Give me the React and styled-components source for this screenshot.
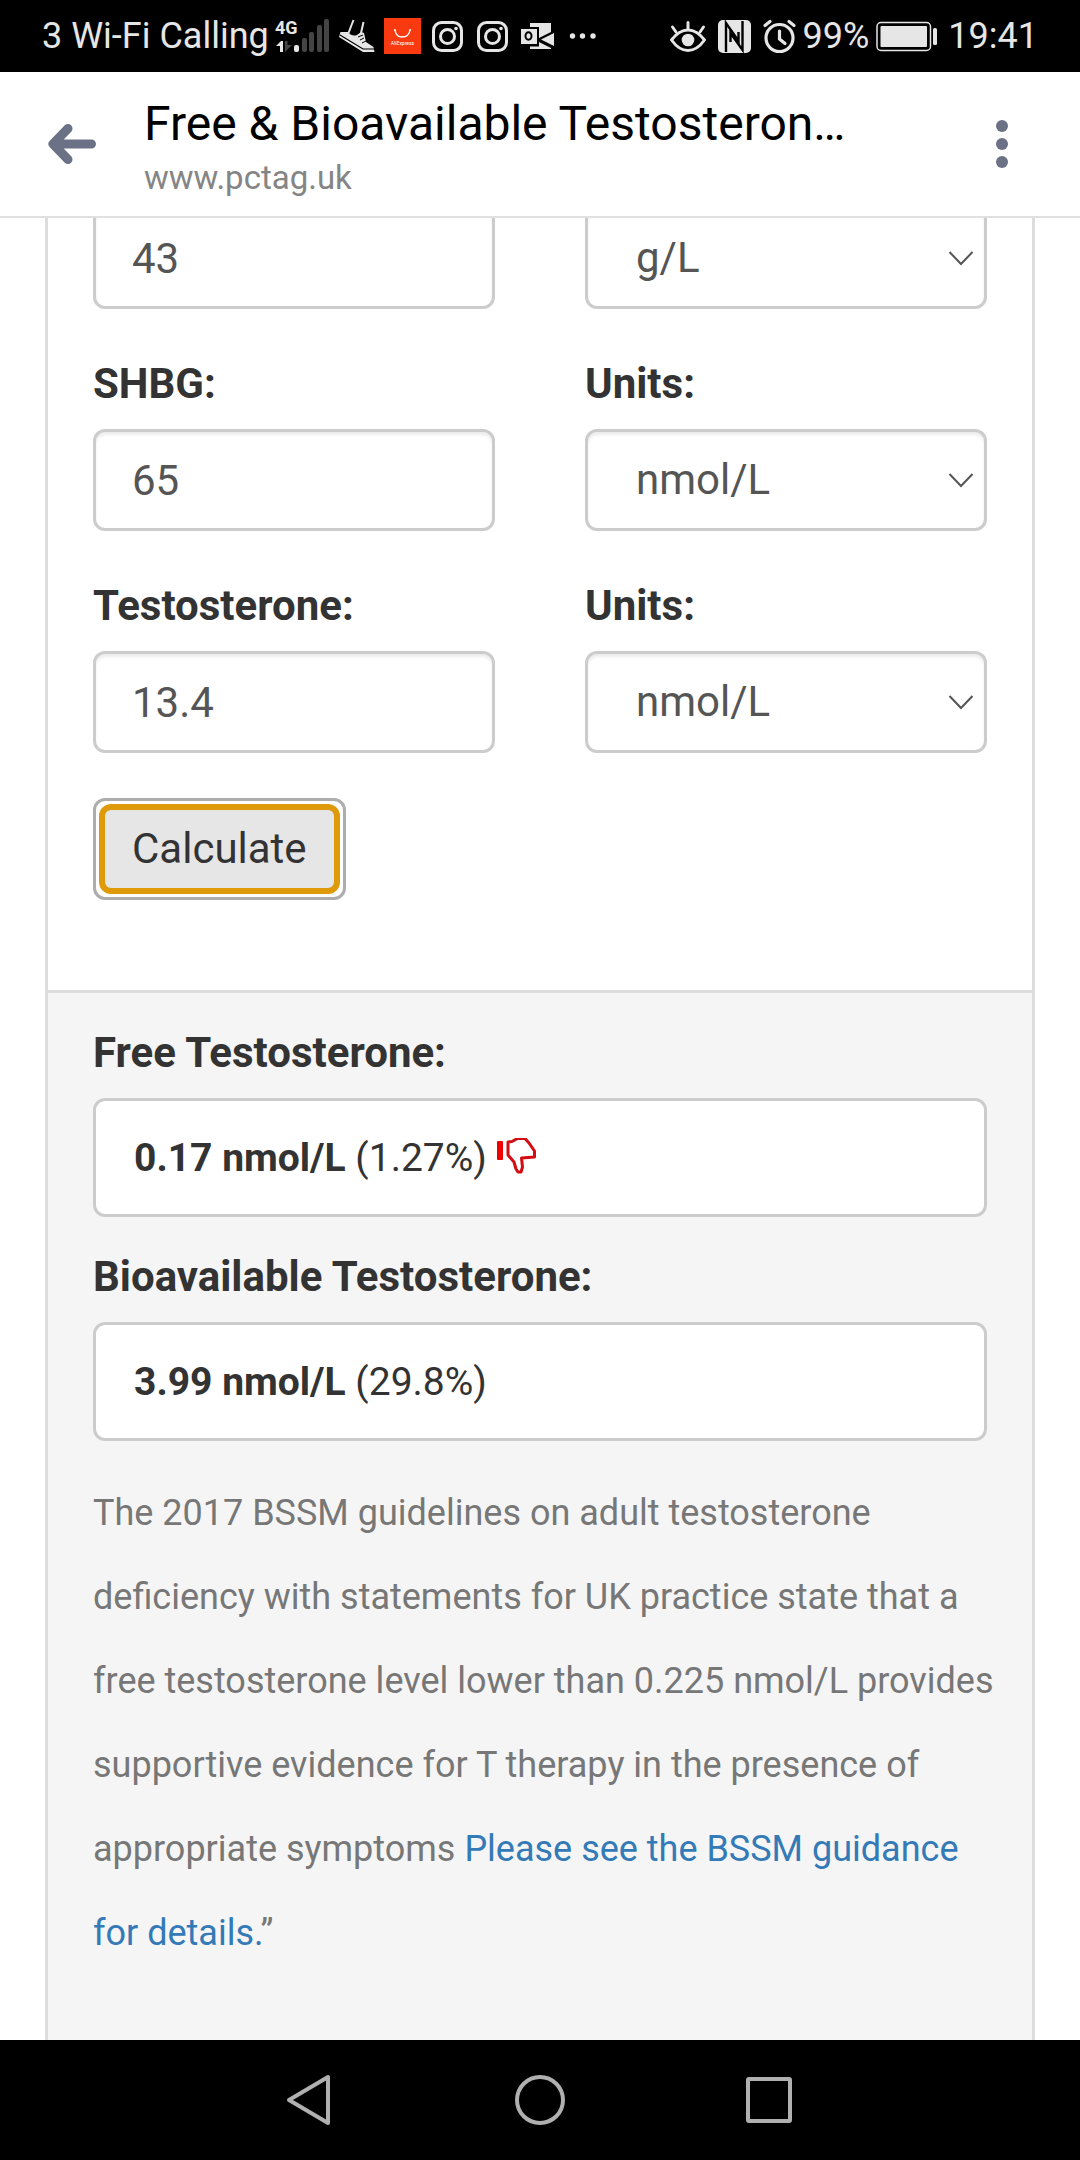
import React, { useState } from 'react'
import styled, { createGlobalStyle } from 'styled-components'

const GlobalStyle = createGlobalStyle`
	* {
		box-sizing: border-box;
	}

	body {
		margin: 0;
		background: white;
		font-family: Roboto, 'Liberation Sans', sans-serif;
		font-size: 42px;
		line-height: 60px;
		color: #333;
	}
`

const Page = styled.div`
	display: flex;
	flex-direction: column;
	min-height: 100vh;
`

const StatusBar = styled.div`
	display: flex;
	justify-content: space-between;
	height: 72px;
	padding: 0 42px;
	background: black;
	color: #e6e6e6;
	font-size: 36px;
	line-height: 74px;
	white-space: nowrap;
`
const StatusGroup = styled.div`
	display: flex;
	align-items: center;

	svg {
		display: block;
		flex: none;
	}
`

const Header = styled.header`
	display: flex;
	align-items: center;
	height: 146px;
	padding: 0 48px;
	border-bottom: 2px solid #e0e0e0;
	background: white;
`
const IconButton = styled.button`
	display: flex;
	padding: 0;
	border: none;
	background: none;
	cursor: pointer;
`
const TitleBox = styled.div`
	flex: 1;
	min-width: 0;
	padding: 8px 0 0 48px;
`
const Title = styled.h1`
	margin: 0;
	color: black;
	font-size: 48px;
	font-weight: 400;
	line-height: 60px;
	white-space: nowrap;
`
const Url = styled.div`
	color: #858585;
	font-size: 33px;
	line-height: 48px;
`

const Main = styled.main`
	display: flex;
	flex: 1;
	padding: 0 45px;
	overflow: hidden;
`
const Card = styled.div`
	display: flex;
	flex: 1;
	flex-direction: column;
	min-width: 0;
	border: 3px solid #ddd;
	border-width: 0 3px;
`
/* the page is scrolled, so the first row slides under the header */
const Form = styled.form`
	margin-top: -11px;
	padding: 0 45px 90px;
`
const Row = styled.div`
	display: grid;
	grid-template-columns: 1fr 1fr;
	column-gap: 90px;
	margin-bottom: 45px;
`
const Label = styled.label`
	display: block;
	margin-bottom: 15px;
	font-weight: 700;
`
const Input = styled.input`
	display: block;
	width: 100%;
	height: 102px;
	padding: 0 36px;
	border: 3px solid #ccc;
	border-radius: 12px;
	background: white;
	box-shadow: inset 0 3px 3px rgba(0, 0, 0, 0.075);
	color: #555;
	font: inherit;
	outline: none;
`
const SelectBox = styled.div`
	display: grid;
	align-items: center;

	> * {
		grid-area: 1 / 1;
	}

	svg {
		justify-self: end;
		margin-right: 13px;
		pointer-events: none;
	}
`
const Select = styled(Input).attrs({ as: 'select' })`
	padding: 0 48px;
	appearance: none;
`
const CalculateButton = styled.button`
	display: flex;
	height: 102px;
	padding: 3px;
	border: 3px solid #adadad;
	border-radius: 12px;
	background: white;
	color: #333;
	font: inherit;
	cursor: pointer;
`
const FocusRing = styled.span`
	display: flex;
	align-items: center;
	height: 90px;
	padding: 0 27px;
	border: 6px solid #df9a0a;
	border-radius: 12px;
	background: #e6e6e6;
`

const Results = styled.section`
	flex: 1;
	padding: 30px 45px 65px;
	border-top: 3px solid #ddd;
	background: #f5f5f5;
`
const ResultTitle = styled.h2`
	margin: 0 0 15px;
	font-size: 42px;
	font-weight: 700;
	line-height: 60px;
`
const ResultBox = styled.div`
	display: flex;
	align-items: center;
	gap: 9px;
	height: 119px;
	margin-bottom: 30px;
	padding: 0 38px;
	border: 3px solid #ccc;
	border-radius: 12px;
	background: white;
	font-size: 39px;
`
const Note = styled.p`
	margin: 0 -12px 0 0;
	color: #777;
	font-size: 36px;
	line-height: 84px;
`
const Link = styled.a`
	color: #337ab7;
	text-decoration: none;
`

const NavBar = styled.nav`
	display: flex;
	align-items: center;
	justify-content: center;
	gap: 167px;
	height: 120px;
	background: black;
`

const SignalIcon = () => (
	<svg width='66' height='72' viewBox='269 0 66 72'>
		<text x='275' y='34' fontSize='18' fontWeight='700' fontFamily='Roboto' fill='#e6e6e6'>
			4G
		</text>
		<path d='M276 46 L281 41 H283 V52 H280 V46 Z' fill='#e6e6e6' />
		<path d='M285 41 H287.5 V45 H292 L285 52 Z' fill='#444' />
		<rect x='294' y='45' width='5' height='7' rx='2' fill='#e6e6e6' />
		<g fill='#444'>
			<rect x='302' y='38' width='5' height='14' rx='2' />
			<rect x='309' y='32' width='5' height='20' rx='2' />
			<rect x='317' y='25' width='5' height='27' rx='2' />
			<rect x='324' y='19' width='5' height='33' rx='2' />
		</g>
	</svg>
)

const ShoeIcon = () => (
	<svg width='45' height='72' viewBox='335 0 45 72'>
		<path d='M340.500 32 H348 Q352 37 357 35 L361 32 L364 33 L366 42 L373.500 47 L374.500 52 L363 52 L339 37 Z' fill='#e6e6e6' />
		<path d='M353.500 20 L348.500 33 M363.500 22 L361 33' fill='none' stroke='#e6e6e6' strokeWidth='2' />
		<path d='M340 35 L363 49 H375' fill='none' stroke='black' strokeWidth='1.2' />
		<path d='M358 37 L363 35 M360 40 L364 38 M362 43 L366 41' fill='none' stroke='black' strokeWidth='1' />
	</svg>
)

const AliIcon = () => (
	<svg width='45' height='72' viewBox='380 0 45 72'>
		<rect x='384' y='18' width='37' height='36' fill='#f93a10' />
		<path d='M395 30 Q396 37 402 37 Q409 37 410 30' fill='none' stroke='white' strokeWidth='1.4' />
		<circle cx='395' cy='30' r='1' fill='white' />
		<circle cx='410' cy='30' r='1' fill='white' />
		<text x='402.5' y='45' fontSize='5' fontFamily='Roboto' textAnchor='middle' fill='white'>
			AliExpress
		</text>
	</svg>
)

const InstagramIcon = () => (
	<svg width='45' height='72' viewBox='0 0 45 72' fill='none' stroke='#e6e6e6'>
		<rect x='8.5' y='22.5' width='28' height='28' rx='8' strokeWidth='3' />
		<circle cx='22.5' cy='36.5' r='7' strokeWidth='3' />
		<circle cx='31' cy='28.5' r='1.8' fill='#e6e6e6' stroke='none' />
	</svg>
)

const OutlookIcon = () => (
	<svg width='45' height='72' viewBox='515 0 45 72'>
		<g fill='#e6e6e6'>
			<path d='M530 23 H551 V32 L539 38 V27 H530 Z' />
			<path d='M554 33 V46 L541 39.500 Z' />
			<path d='M539 42 L551 48 V49 H530 V46.500 H539 Z' />
			<rect x='521' y='29' width='16' height='15' />
		</g>
		<ellipse cx='528.5' cy='36' rx='3' ry='3.8' fill='none' stroke='black' strokeWidth='2' />
	</svg>
)

const MoreIcon = () => (
	<svg width='45' height='72' viewBox='0 0 45 72' fill='#e6e6e6'>
		<circle cx='12.5' cy='36' r='2.7' />
		<circle cx='22.5' cy='36' r='2.7' />
		<circle cx='33' cy='36' r='2.7' />
	</svg>
)

const EyeIcon = () => (
	<svg width='46' height='72' viewBox='665 0 46 72' fill='none' stroke='#e6e6e6' strokeWidth='3' strokeLinecap='round'>
		<path d='M671.5 40 Q679 30 688 30 Q697 30 704.5 40 Q697 50.5 688 50.5 Q679 50.5 671.5 40 Z' strokeLinejoin='round' />
		<circle cx='688' cy='40' r='6.300' fill='#e6e6e6' stroke='none' />
		<path d='M688 22.500 V29 M672.500 27 L676 32 M703.500 27 L700 32' />
	</svg>
)

const NfcIcon = () => (
	<svg width='46' height='72' viewBox='711 0 46 72'>
		<rect x='718' y='20' width='33' height='33' rx='5' fill='#e6e6e6' />
		<g fill='none' stroke='black' strokeWidth='2.4'>
			<path d='M726 52 V23 L738.500 41 V32' />
			<path d='M730.500 42 V33 L742.500 50 V21' />
		</g>
	</svg>
)

const AlarmIcon = () => (
	<svg width='46' height='72' viewBox='757 0 46 72' fill='none' stroke='#e6e6e6' strokeWidth='3.2' strokeLinecap='round'>
		<circle cx='779.5' cy='38' r='13.5' />
		<path d='M779.5 31 V39 L785 43.500 M765 25.500 L770 21.500 M794 25.500 L789 21.500' />
	</svg>
)

const BatteryIcon = () => (
	<svg width='79' height='72' viewBox='870 0 79 72'>
		<rect x='878' y='22.500' width='53.500' height='28' rx='4' fill='none' stroke='#e6e6e6' strokeWidth='1.5' />
		<rect x='881.500' y='26' width='46.500' height='21' rx='1' fill='#e6e6e6' />
		<rect x='934' y='28' width='4' height='17' rx='1.500' fill='#e6e6e6' />
	</svg>
)

const Chevron = () => (
	<svg width='26' height='18' viewBox='0 0 26 18' fill='none' stroke='#555' strokeWidth='2'>
		<path d='M1.500 3 L13 15 L24.500 3' />
	</svg>
)

const ThumbDown = () => (
	<svg width='42' height='40' viewBox='-1 2 42 40'>
		<rect x='0' y='5' width='6' height='19' rx='1' fill='#f00000' />
		<path
			d='M11 6 L15 5.500 L20.500 2.500 H28 L32 7 L37.500 15 V21 L24.500 22 L25.500 31 L24 36 L21 36 L19 33 L17 26 L11 19 Z'
			fill='white'
			stroke='#d40d12'
			strokeWidth='3'
			strokeLinejoin='round'
		/>
	</svg>
)

const unitOptions = {
	albumin: ['g/L', 'g/dL'],
	hormone: ['nmol/L', 'ng/dL'],
}

function UnitSelect({ id, options, ...rest }) {
	return (
		<SelectBox>
			<Select id={id} {...rest}>
				{options.map((unit) => (
					<option key={unit}>{unit}</option>
				))}
			</Select>
			<Chevron />
		</SelectBox>
	)
}

export default function App() {
	const [values, setValues] = useState({ albumin: '43', shbg: '65', testosterone: '13.4' })

	const onChangeHandler = (e) => {
		setValues({ ...values, [e.target.name]: e.target.value })
	}

	const fields = [
		{ name: 'shbg', label: 'SHBG:' },
		{ name: 'testosterone', label: 'Testosterone:' },
	]

	return (
		<Page>
			<GlobalStyle />
			<StatusBar>
				<StatusGroup>
					<span>3 Wi-Fi Calling</span>
					<SignalIcon />
					<ShoeIcon />
					<AliIcon />
					<InstagramIcon />
					<InstagramIcon />
					<OutlookIcon />
					<MoreIcon />
				</StatusGroup>
				<StatusGroup>
					<EyeIcon />
					<NfcIcon />
					<AlarmIcon />
					<span>99%</span>
					<BatteryIcon />
					<span>19:41</span>
				</StatusGroup>
			</StatusBar>

			<Header>
				<IconButton aria-label='Back'>
					<svg width='48' height='42' viewBox='0 0 48 42' fill='none' stroke='#6b7285' strokeWidth='9' strokeLinecap='round' strokeLinejoin='round'>
						<path d='M20 5.500 L5 21 L20 36.500 M6 21 H43.500' />
					</svg>
				</IconButton>
				<TitleBox>
					<Title>Free &amp; Bioavailable Testosteron…</Title>
					<Url>www.pctag.uk</Url>
				</TitleBox>
				<IconButton aria-label='Menu'>
					<svg width='60' height='54' viewBox='0 0 60 54' fill='#6b7285'>
						<circle cx='30' cy='9' r='6' />
						<circle cx='30' cy='27' r='6' />
						<circle cx='30' cy='45' r='6' />
					</svg>
				</IconButton>
			</Header>

			<Main>
				<Card>
					<Form onSubmit={(e) => e.preventDefault()}>
						<Row>
							<Input name='albumin' aria-label='Albumin' value={values.albumin} onChange={onChangeHandler} />
							<UnitSelect id='albumin-units' aria-label='Albumin units' options={unitOptions.albumin} />
						</Row>
						{fields.map(({ name, label }) => (
							<Row key={name}>
								<div>
									<Label htmlFor={name}>{label}</Label>
									<Input id={name} name={name} value={values[name]} onChange={onChangeHandler} />
								</div>
								<div>
									<Label htmlFor={`${name}-units`}>Units:</Label>
									<UnitSelect id={`${name}-units`} options={unitOptions.hormone} />
								</div>
							</Row>
						))}
						<CalculateButton type='submit'>
							<FocusRing>Calculate</FocusRing>
						</CalculateButton>
					</Form>

					<Results>
						<ResultTitle>Free Testosterone:</ResultTitle>
						<ResultBox>
							<span>
								<b>0.17 nmol/L</b> (1.27%)
							</span>
							<ThumbDown />
						</ResultBox>
						<ResultTitle>Bioavailable Testosterone:</ResultTitle>
						<ResultBox>
							<span>
								<b>3.99 nmol/L</b> (29.8%)
							</span>
						</ResultBox>
						<Note>
							The 2017 BSSM guidelines on adult testosterone deficiency with statements for UK practice state
							that a free testosterone level lower than 0.225 nmol/L provides supportive evidence for T
							therapy in the presence of appropriate symptoms{' '}
							<Link href='#guidance'>Please see the BSSM guidance for details.</Link>”
						</Note>
					</Results>
				</Card>
			</Main>

			<NavBar>
				<IconButton aria-label='Back'>
					<svg width='64' height='64' viewBox='0 0 64 64' fill='none' stroke='#b0b0b0' strokeWidth='4' strokeLinejoin='round'>
						<path d='M12 32 L51 9 V55 Z' />
					</svg>
				</IconButton>
				<IconButton aria-label='Home'>
					<svg width='64' height='64' viewBox='0 0 64 64' fill='none' stroke='#b0b0b0' strokeWidth='4'>
						<circle cx='32' cy='32' r='23' />
					</svg>
				</IconButton>
				<IconButton aria-label='Recent apps'>
					<svg width='64' height='64' viewBox='0 0 64 64' fill='none' stroke='#b0b0b0' strokeWidth='4' strokeLinejoin='round'>
						<rect x='9' y='11' width='42' height='42' rx='1' />
					</svg>
				</IconButton>
			</NavBar>
		</Page>
	)
}
